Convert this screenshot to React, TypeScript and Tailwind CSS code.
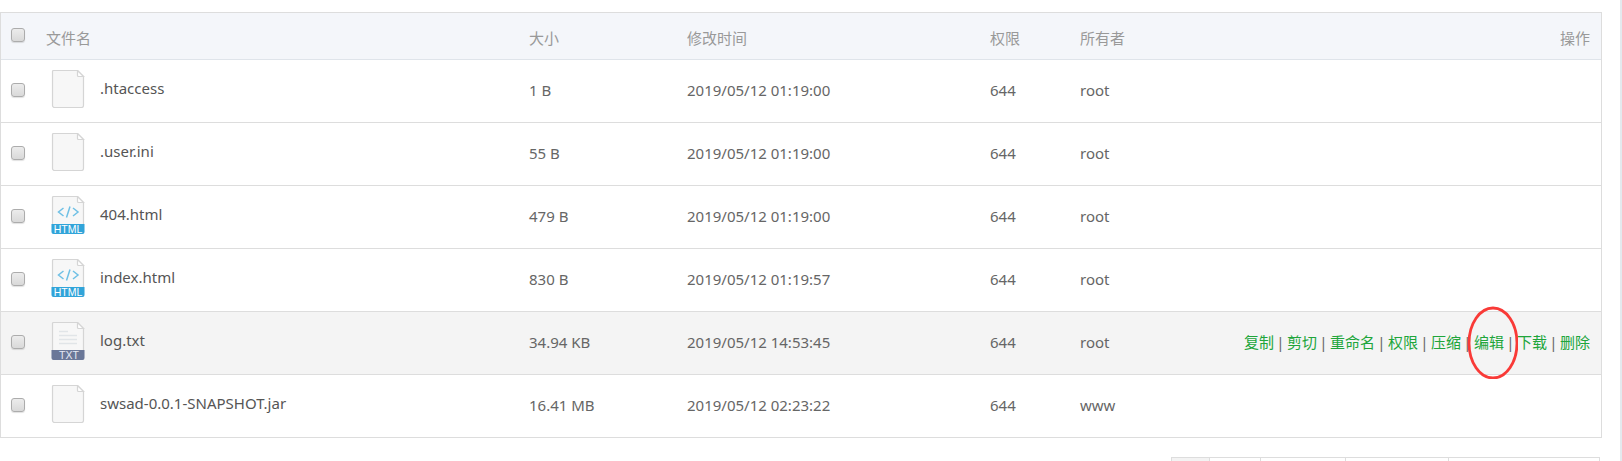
import React from "react";

type Kind = "blank" | "html" | "txt";

interface FileRow {
  name: string;
  kind: Kind;
  size: string;
  modified: string;
  mode: string;
  owner: string;
  active?: boolean;
}

const files: FileRow[] = [
  { name: ".htaccess", kind: "blank", size: "1 B", modified: "2019/05/12 01:19:00", mode: "644", owner: "root" },
  { name: ".user.ini", kind: "blank", size: "55 B", modified: "2019/05/12 01:19:00", mode: "644", owner: "root" },
  { name: "404.html", kind: "html", size: "479 B", modified: "2019/05/12 01:19:00", mode: "644", owner: "root" },
  { name: "index.html", kind: "html", size: "830 B", modified: "2019/05/12 01:19:57", mode: "644", owner: "root" },
  { name: "log.txt", kind: "txt", size: "34.94 KB", modified: "2019/05/12 14:53:45", mode: "644", owner: "root", active: true },
  { name: "swsad-0.0.1-SNAPSHOT.jar", kind: "blank", size: "16.41 MB", modified: "2019/05/12 02:23:22", mode: "644", owner: "www" },
];

const actions = ["复制", "剪切", "重命名", "权限", "压缩", "编辑", "下载", "删除"];

function FileIcon({ kind }: { kind: Kind }) {
  return (
    <svg width="34" height="38" viewBox="0 0 34 38" className="shrink-0" aria-hidden="true">
      <path
        d="M2.5 .5H26.5L32.5 6.5V35.5a2 2 0 0 1-2 2H3.5a2 2 0 0 1-2-2V1.5A1 1 0 0 1 2.5 .5Z"
        fill="#f7f7f7"
        stroke="#d5d5d5"
        strokeWidth="1.2"
      />
      <path d="M26.5 .5V5.5a1 1 0 0 0 1 1H32.5Z" fill="#fff" stroke="#d5d5d5" strokeWidth="1.2" />
      {kind === "html" && (
        <>
          <path
            d="M12.5 12 7.5 16 12.5 20M22 12 27 16 22 20M19 10.5 15.5 21.5"
            fill="none"
            stroke="#6fc0e5"
            strokeWidth="1.5"
          />
          <path d="M.5 28H33.5V36a2 2 0 0 1-2 2H2.5a2 2 0 0 1-2-2Z" fill="#31a4d9" />
          <text x="17" y="36.5" textAnchor="middle" fontSize="10.5" fill="#fff" fontFamily="Liberation Sans, sans-serif">
            HTML
          </text>
        </>
      )}
      {kind === "txt" && (
        <>
          <path d="M8 9.5H17M8 13.5H26M8 17.5H26M8 21.5H26" stroke="#e1e5e8" strokeWidth="1.5" />
          <path d="M.5 28H33.5V36a2 2 0 0 1-2 2H2.5a2 2 0 0 1-2-2Z" fill="#6a7798" />
          <text x="18" y="36.5" textAnchor="middle" fontSize="10.5" fill="#e4e8f4" fontFamily="Liberation Sans, sans-serif">
            TXT
          </text>
        </>
      )}
    </svg>
  );
}

function Check({ label }: { label: string }) {
  return (
    <input
      type="checkbox"
      aria-label={label}
      className="block size-3.5 appearance-none rounded-[3px] border border-[#acacac] bg-linear-to-b from-[#ececec] to-[#d9d9d9] shadow-[0_1px_1px_rgba(0,0,0,0.12)] checked:bg-[#999999]"
    />
  );
}

function Actions() {
  return (
    <div className="flex justify-end whitespace-nowrap text-[#20a53a]">
      {actions.map((action, i) => (
        <React.Fragment key={action}>
          {i > 0 && <span className="w-[13px] text-center text-[#666666]">|</span>}
          <a href="#" className="relative">
            {action}
            {action === "编辑" && (
              <svg
                width="52"
                height="74"
                viewBox="0 0 52 74"
                className="pointer-events-none absolute top-1/2 -left-2 max-w-none -translate-y-1/2"
                aria-hidden="true"
              >
                <ellipse cx="27" cy="38" rx="24" ry="35" fill="none" stroke="#f93a37" strokeWidth="2.8" />
              </svg>
            )}
          </a>
        </React.Fragment>
      ))}
    </div>
  );
}

export default function App() {
  return (
    <main className="border-r-2 border-[#e4e9ee] bg-white pt-3 pr-[18px] font-['Noto_Sans','Noto_Sans_CJK_SC',sans-serif] text-[15px] leading-5 text-[#666666]">
      <table className="w-full table-fixed border-separate border-spacing-0 border-x border-t border-[#dddddd] text-left">
        <colgroup>
          <col className="w-[37px]" />
          <col className="w-[483px]" />
          <col className="w-[158px]" />
          <col className="w-[303px]" />
          <col className="w-[90px]" />
          <col className="w-[120px]" />
          <col />
        </colgroup>
        <thead>
          <tr className="h-[47px] bg-[#f4f6fa] font-['Noto_Sans_CJK_SC',sans-serif] text-[#999999] [&>th]:border-b [&>th]:border-[#dfe4ea] [&>th]:font-normal">
            <th className="pb-0.5 pl-2.5">
              <Check label="全选" />
            </th>
            <th className="px-2 pt-1">文件名</th>
            <th className="px-2 pt-1">大小</th>
            <th className="px-2 pt-1">修改时间</th>
            <th className="px-2 pt-1">权限</th>
            <th className="px-2 pt-1">所有者</th>
            <th className="px-[11px] pt-1 text-right">操作</th>
          </tr>
        </thead>
        <tbody>
          {files.map((file) => (
            <tr
              key={file.name}
              className={
                file.active
                  ? "h-[63px] bg-[#f4f4f4] [&>td]:border-b [&>td]:border-[#dddddd]"
                  : "h-[63px] [&>td]:border-b [&>td]:border-[#dddddd]"
              }
            >
              <td className="pb-0.5 pl-2.5">
                <Check label={file.name} />
              </td>
              <td className="pt-2.5 pb-3.5 pl-[13px]">
                <div className="flex items-center gap-[15px] text-[#555555]">
                  <FileIcon kind={file.kind} />
                  <span className="pb-0.5">{file.name}</span>
                </div>
              </td>
              <td className="px-2 pb-0.5">{file.size}</td>
              <td className="px-2 pb-0.5">{file.modified}</td>
              <td className="px-2 pb-0.5">{file.mode}</td>
              <td className="px-2 pb-0.5">{file.owner}</td>
              <td className="px-[11px] pb-0.5">{file.active && <Actions />}</td>
            </tr>
          ))}
        </tbody>
      </table>
      <div className="mt-[19px] mr-0.5 flex h-1 justify-end">
        <div className="flex divide-x divide-[#dddddd] border-x border-t border-[#dddddd]">
          <span className="w-[38px] bg-[#f3f3f3]" />
          <span className="w-[51px]" />
          <span className="w-[85px]" />
          <span className="w-[103px]" />
          <span className="w-[150px]" />
        </div>
      </div>
    </main>
  );
}
